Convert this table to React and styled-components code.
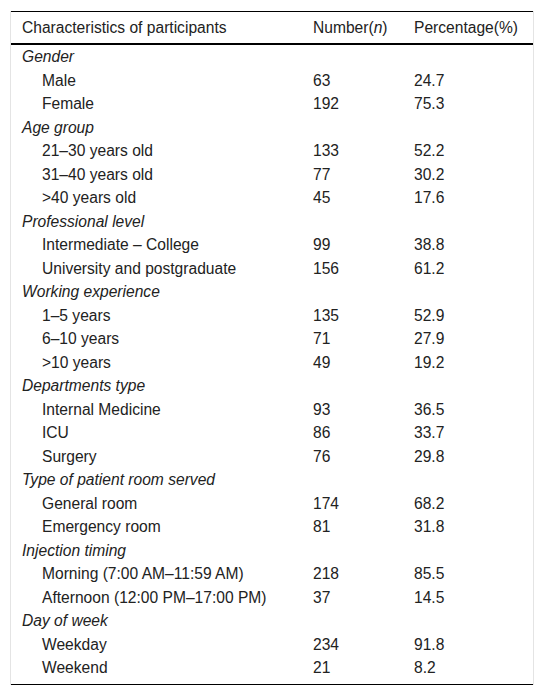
import React from "react"
import styled, { createGlobalStyle } from "styled-components"

const GlobalStyle = createGlobalStyle`
body {
  margin: 0;
  background: #ffffff;
}
`

const Frame = styled.div`
margin: 11px 0 0 10px;
width: 522px;
border-left: 1px solid #e4e4e4;
border-right: 1px solid #e4e4e4;
font-family: "Liberation Sans", Arial, sans-serif;
font-size: 15.6px;
color: #222;
`

const Table = styled.table`
width: 100%;
border-collapse: collapse;
table-layout: fixed;
border-top: 1px solid #000;
border-bottom: 1px solid #000;
`

const HeadCell = styled.th`
height: 31px;
padding: 0 0 0 11px;
text-align: left;
font-weight: normal;
vertical-align: middle;
border-bottom: 2px solid #000;
width: ${props => props.w || "auto"};
`

const Cell = styled.td`
padding: 0 0 0 ${props => (props.indent ? "31px" : "11px")};
line-height: 23.5px;
white-space: nowrap;
font-style: ${props => (props.group ? "italic" : "normal")};
`

const LastRow = styled.tr`
td {
  padding-bottom: 4px;
}
`

const groups = [
  ["Gender", [["Male", 63, "24.7"], ["Female", 192, "75.3"]]],
  ["Age group", [["21–30 years old", 133, "52.2"], ["31–40 years old", 77, "30.2"], [">40 years old", 45, "17.6"]]],
  ["Professional level", [["Intermediate – College", 99, "38.8"], ["University and postgraduate", 156, "61.2"]]],
  ["Working experience", [["1–5 years", 135, "52.9"], ["6–10 years", 71, "27.9"], [">10 years", 49, "19.2"]]],
  ["Departments type", [["Internal Medicine", 93, "36.5"], ["ICU", 86, "33.7"], ["Surgery", 76, "29.8"]]],
  ["Type of patient room served", [["General room", 174, "68.2"], ["Emergency room", 81, "31.8"]]],
  ["Injection timing", [["Morning (7:00 AM–11:59 AM)", 218, "85.5"], ["Afternoon (12:00 PM–17:00 PM)", 37, "14.5"]]],
  ["Day of week", [["Weekday", 234, "91.8"], ["Weekend", 21, "8.2"]]],
]

const App = () => {
  const rows = []
  groups.forEach(([title, items], gi) => {
    rows.push(
      <tr key={title}>
        <Cell group colSpan={3}>{title}</Cell>
      </tr>
    )
    items.forEach(([label, n, pct], ii) => {
      const last = gi === groups.length - 1 && ii === items.length - 1
      const Row = last ? LastRow : "tr"
      rows.push(
        <Row key={title + label}>
          <Cell indent>{label}</Cell>
          <Cell>{n}</Cell>
          <Cell>{pct}</Cell>
        </Row>
      )
    })
  })

  return (
    <>
      <GlobalStyle />
      <Frame>
        <Table>
          <thead>
            <tr>
              <HeadCell w="280px">Characteristics of participants</HeadCell>
              <HeadCell w="90px">Number(<i>n</i>)</HeadCell>
              <HeadCell>Percentage(%)</HeadCell>
            </tr>
          </thead>
          <tbody>{rows}</tbody>
        </Table>
      </Frame>
    </>
  )
}

export default App
